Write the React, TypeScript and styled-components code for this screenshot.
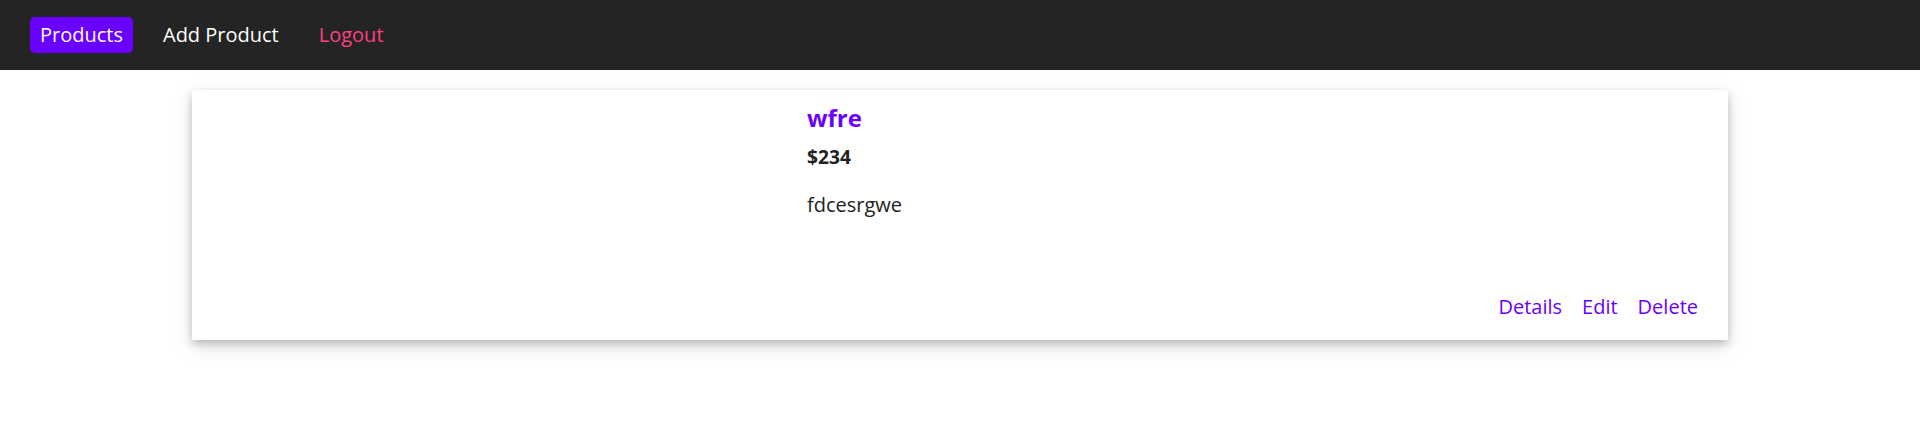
import React from "react";
import styled, { createGlobalStyle } from "styled-components";

const Global = createGlobalStyle`
  html, body { margin: 0; padding: 0; background: #ffffff; }
  body { font-family: "Open Sans", "Noto Sans", sans-serif; color: #222; min-height: 100vh; }
  * { box-sizing: border-box; }
`;

const Header = styled.header`
  height: 70px;
  background: #242424;
  display: flex;
  align-items: center;
  padding-left: 30px;
  gap: 20px;
`;

const NavLink = styled.a<{ $active?: boolean; $danger?: boolean }>`
  font-size: 20px;
  line-height: 27px;
  padding: 4px 10px 5px;
  border-radius: 5px;
  text-decoration: none;
  cursor: pointer;
  color: ${(p) => (p.$danger ? "#ff4081" : "#ffffff")};
  background: ${(p) => (p.$active ? "#6a00ff" : "transparent")};
`;

const Main = styled.main`
  display: flex;
  flex-direction: column;
  align-items: center;
  padding: 20px 0 60px;
`;

const Card = styled.article`
  width: 1536px;
  height: 250px;
  background: #fff;
  box-shadow: 0 4px 8px 0 rgba(0, 0, 0, 0.2), 0 6px 20px 0 rgba(0, 0, 0, 0.12);
  display: grid;
  grid-template-columns: 600px 1fr;
`;

const ImageArea = styled.div``;

const Content = styled.div`
  display: flex;
  flex-direction: column;
  padding: 11px 30px 20px 15px;
`;

const Title = styled.h2`
  margin: 0;
  font-size: 24px;
  font-weight: 700;
  line-height: 33px;
  color: #6a00ff;
`;

const Price = styled.div`
  margin-top: 10px;
  font-size: 19.2px;
  font-weight: 700;
  line-height: 26px;
  color: #222;
`;

const Description = styled.p`
  margin: 21px 0 0;
  font-size: 20px;
  line-height: 27px;
  color: #222;
`;

const Actions = styled.div`
  margin-top: auto;
  display: flex;
  justify-content: flex-end;
  gap: 20px;
`;

const ActionLink = styled.a`
  font-size: 20px;
  line-height: 27px;
  color: #6a00ff;
  text-decoration: none;
  cursor: pointer;
`;

export default function App() {
  return (
    <>
      <Global />
      <Header>
        <NavLink $active>Products</NavLink>
        <NavLink>Add Product</NavLink>
        <NavLink $danger>Logout</NavLink>
      </Header>
      <Main>
        <Card>
          <ImageArea />
          <Content>
            <Title>wfre</Title>
            <Price>$234</Price>
            <Description>fdcesrgwe</Description>
            <Actions>
              <ActionLink>Details</ActionLink>
              <ActionLink>Edit</ActionLink>
              <ActionLink>Delete</ActionLink>
            </Actions>
          </Content>
        </Card>
      </Main>
    </>
  );
}
